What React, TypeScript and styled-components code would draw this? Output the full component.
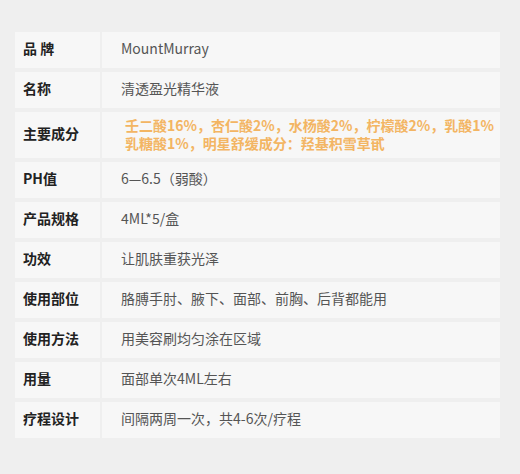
import React from "react";
import styled, { createGlobalStyle } from "styled-components";

const GlobalStyle = createGlobalStyle`
  html, body {
    margin: 0;
    padding: 0;
    background: #efefef;
  }
  body {
    font-family: "Noto Sans CJK SC", "Noto Sans", sans-serif;
  }
`;

type Item = { label: string; value: string; highlight?: boolean };

const items: Item[] = [
  { label: "品 牌", value: "MountMurray" },
  { label: "名称", value: "清透盈光精华液" },
  {
    label: "主要成分",
    value:
      "壬二酸16%，杏仁酸2%，水杨酸2%，柠檬酸2%，乳酸1%\n乳糖酸1%，明星舒缓成分：羟基积雪草甙",
    highlight: true,
  },
  { label: "PH值", value: "6—6.5（弱酸）" },
  { label: "产品规格", value: "4ML*5/盒" },
  { label: "功效", value: "让肌肤重获光泽" },
  { label: "使用部位", value: "胳膊手肘、腋下、面部、前胸、后背都能用" },
  { label: "使用方法", value: "用美容刷均匀涂在区域" },
  { label: "用量", value: "面部单次4ML左右" },
  { label: "疗程设计", value: "间隔两周一次，共4-6次/疗程" },
];

function App() {
  return (
    <Page>
      <GlobalStyle />
      <Table>
        {items.map((item) => (
          <Row key={item.label} $tall={item.highlight}>
            <Label>{item.label}</Label>
            <Value $highlight={item.highlight}>{item.value}</Value>
          </Row>
        ))}
      </Table>
    </Page>
  );
}
export default App;

const Page = styled.div`
  width: 520px;
  height: 474px;
  padding: 32px 20px 0 15px;
  box-sizing: border-box;
  background: #efefef;
`;

const Table = styled.div`
  display: flex;
  flex-direction: column;
  gap: 4px;
  width: 485px;
`;

const Row = styled.div<{ $tall?: boolean }>`
  display: grid;
  grid-template-columns: 85px 1fr;
  column-gap: 2px;
  height: ${(p) => (p.$tall ? 46 : 36)}px;
`;

const Cell = styled.div`
  background: #f7f7f7;
  display: flex;
  align-items: center;
  padding-bottom: 5px;
  box-sizing: border-box;
`;

const Label = styled(Cell)`
  padding-left: 8px;
  font-size: 14px;
  font-weight: 700;
  color: #222;
  white-space: pre;
`;

const Value = styled(Cell)<{ $highlight?: boolean }>`
  padding-left: ${(p) => (p.$highlight ? 23 : 19)}px;
  padding-bottom: ${(p) => (p.$highlight ? 3 : 5)}px;
  font-size: 14px;
  line-height: 18px;
  white-space: pre-line;
  font-weight: ${(p) => (p.$highlight ? 700 : 400)};
  color: ${(p) => (p.$highlight ? "#f3b563" : "#555")};
`;
